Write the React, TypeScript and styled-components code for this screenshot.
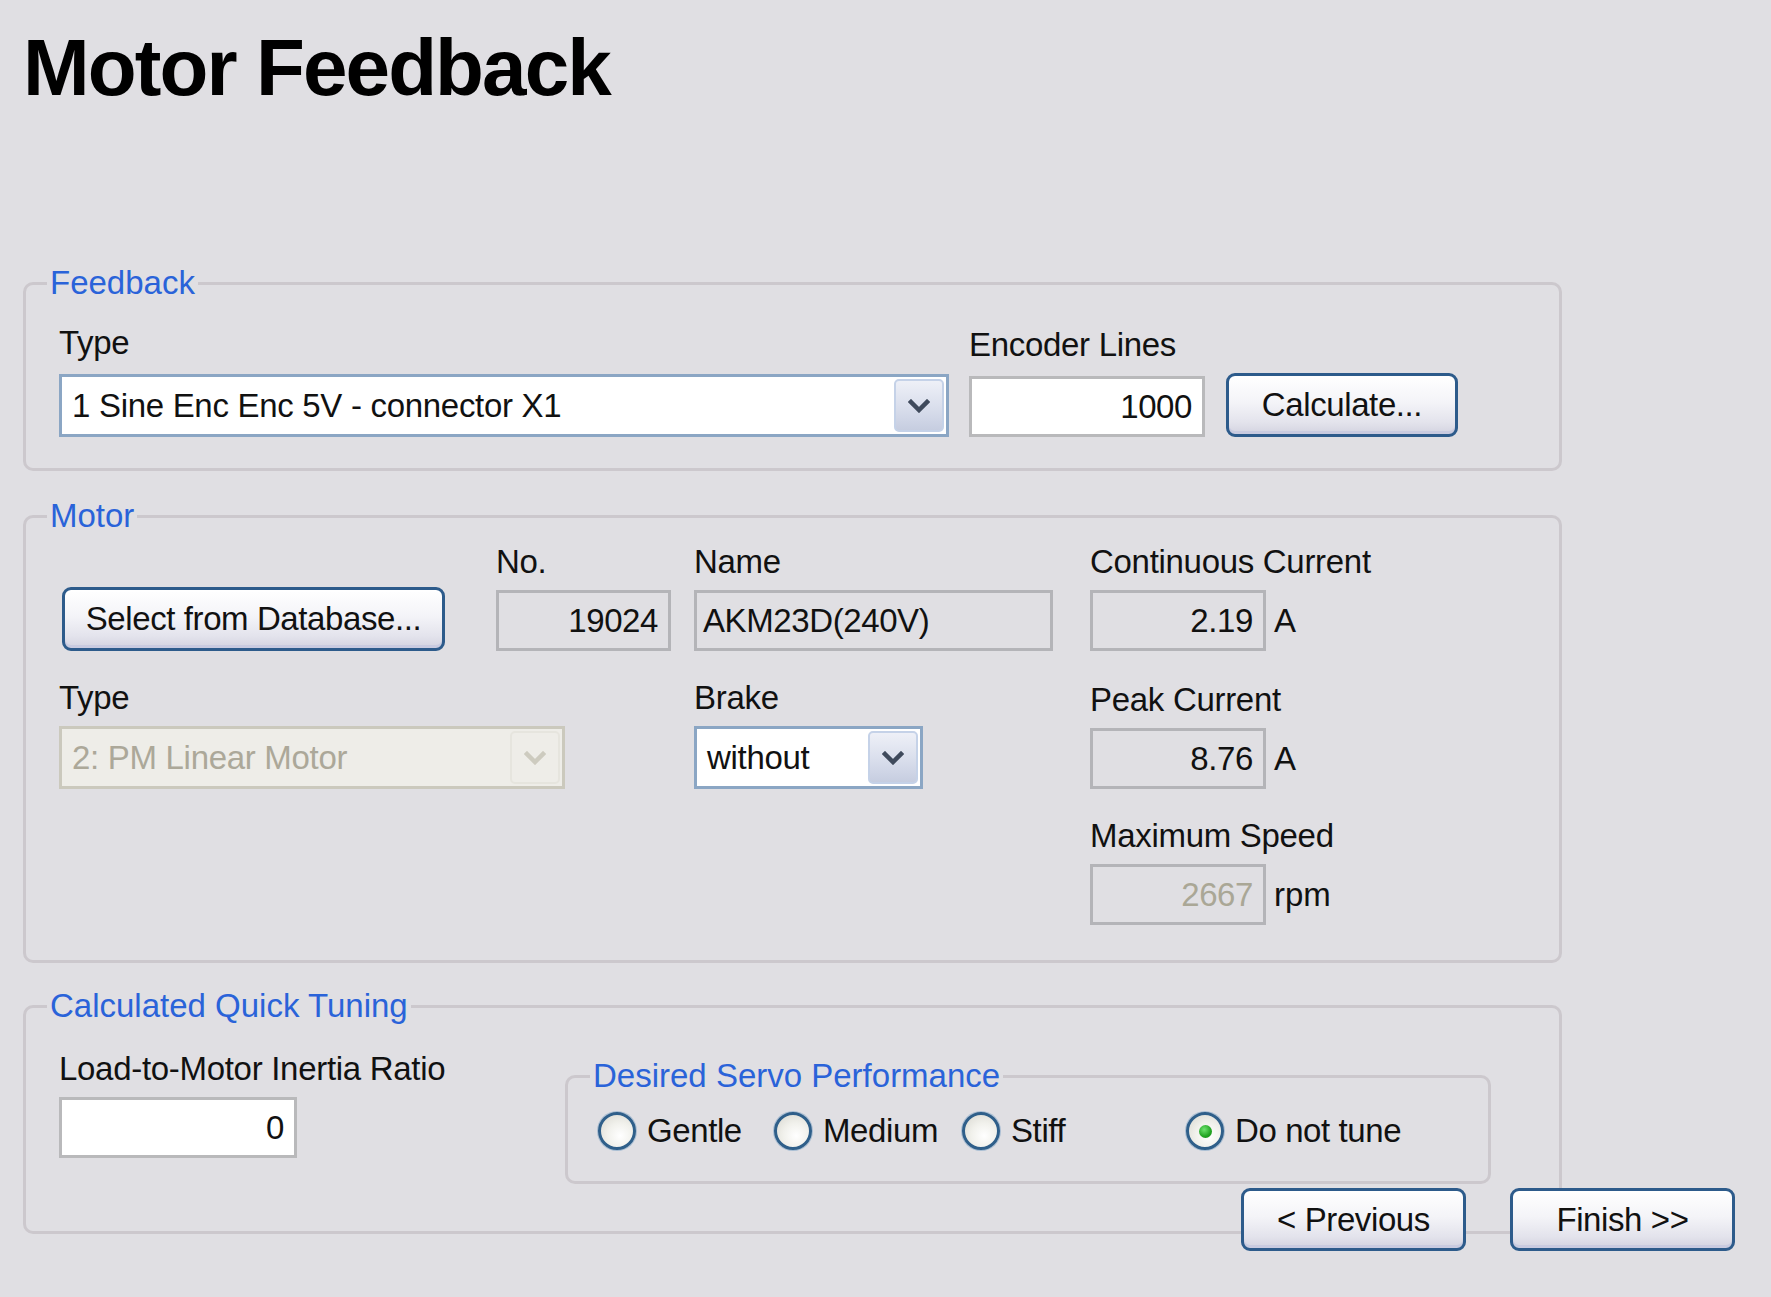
import styled, { createGlobalStyle } from 'styled-components';

const GlobalStyle = createGlobalStyle`
  html, body {
    margin: 0;
    padding: 0;
    background: #e0dfe3;
  }
  body {
    font-family: 'Liberation Sans', Arial, sans-serif;
    color: #111;
  }
`;

const Page = styled.div`
  width: 1771px;
  min-height: 1297px;
  box-sizing: border-box;
  padding: 23px 0 0 23px;
  background: #e0dfe3;
`;

const Title = styled.h1`
  margin: 0 0 151px 0;
  font-size: 80px;
  line-height: 90px;
  font-weight: 700;
  letter-spacing: -1.9px;
  color: #000;
`;

const Group = styled.fieldset<{ $width: number; $mt?: number }>`
  width: ${(p) => p.$width}px;
  box-sizing: border-box;
  margin: ${(p) => p.$mt || 0}px 0 0 0;
  padding: 0;
  min-width: 0;
  border: 3px solid #ccc8cd;
  border-radius: 10px;
`;

const Legend = styled.legend<{ $ml?: number }>`
  margin-left: ${(p) => p.$ml ?? 21}px;
  padding: 0 3px;
  font-size: 33px;
  line-height: 38px;
  color: #2a63d9;
`;

const GroupBody = styled.div<{ $pt: number; $pb: number; $pl?: number }>`
  padding: ${(p) => p.$pt}px 0 ${(p) => p.$pb}px ${(p) => p.$pl ?? 33}px;
`;

const Row = styled.div`
  display: flex;
  align-items: flex-end;
`;

const Field = styled.div<{ $width?: number; $gap?: number }>`
  display: flex;
  flex-direction: column;
  gap: ${(p) => p.$gap ?? 9}px;
  ${(p) => (p.$width ? `width: ${p.$width}px;` : '')}
`;

const Label = styled.div`
  font-size: 33px;
  line-height: 38px;
  letter-spacing: -0.3px;
  white-space: nowrap;
`;

const TextBox = styled.div<{ $width: number; $readOnly?: boolean; $dim?: boolean; $align?: 'left' | 'right' }>`
  width: ${(p) => p.$width}px;
  height: 61px;
  box-sizing: border-box;
  border: 3px solid ${(p) => (p.$readOnly ? '#b4b4b8' : '#b9b9bb')};
  background: ${(p) => (p.$readOnly ? '#e0dfe3' : '#ffffff')};
  color: ${(p) => (p.$dim ? '#aaa796' : '#111')};
  font-size: 33px;
  line-height: 55px;
  text-align: ${(p) => p.$align || 'right'};
  padding: 0 ${(p) => (p.$align === 'left' ? '0 0 6px' : '10px 0 0')};
  letter-spacing: -0.4px;
  white-space: nowrap;
  overflow: hidden;
`;

const UnitRow = styled.div`
  display: flex;
  align-items: center;
  gap: 8px;
`;

const Unit = styled.span`
  font-size: 33px;
  line-height: 38px;
`;

const Combo = styled.div<{ $width: number; $disabled?: boolean }>`
  width: ${(p) => p.$width}px;
  height: 63px;
  box-sizing: border-box;
  display: flex;
  align-items: stretch;
  border: 3px solid ${(p) => (p.$disabled ? '#cbc9bd' : '#8ba6c4')};
  background: ${(p) => (p.$disabled ? '#eeede8' : '#ffffff')};
  padding: 2px;
`;

const ComboText = styled.div<{ $disabled?: boolean }>`
  flex: 1;
  padding-left: 8px;
  font-size: 33px;
  line-height: 53px;
  letter-spacing: -0.3px;
  color: ${(p) => (p.$disabled ? '#aca899' : '#111')};
  white-space: nowrap;
  overflow: hidden;
`;

const DropButton = styled.div<{ $disabled?: boolean }>`
  width: 46px;
  display: flex;
  align-items: center;
  justify-content: center;
  border-radius: 5px;
  border: 2px solid ${(p) => (p.$disabled ? '#e6e5de' : '#c5d2e8')};
  background: ${(p) =>
    p.$disabled
      ? '#eeede8'
      : 'linear-gradient(180deg, #eef0f7 0%, #d9deec 55%, #c6cde0 100%)'};
  color: ${(p) => (p.$disabled ? '#cdcbbf' : '#3f4a5c')};
`;

const Button = styled.div<{ $width: number; $height?: number }>`
  width: ${(p) => p.$width}px;
  height: ${(p) => p.$height || 64}px;
  box-sizing: border-box;
  display: flex;
  align-items: center;
  justify-content: center;
  border: 3px solid #2d5b8b;
  border-radius: 9px;
  background: linear-gradient(180deg, #ffffff 0%, #f4f4f8 45%, #e3e3ec 80%, #d3d3e0 100%);
  box-shadow: inset 0 -3px 0 #c9cbe0, inset 0 2px 0 #ffffff;
  font-size: 33px;
  letter-spacing: -0.4px;
  color: #111;
  white-space: nowrap;
`;

const MotorGrid = styled.div`
  display: grid;
  grid-template-columns: 437px 198px 396px auto;
  row-gap: 28px;
  align-items: end;
`;

const Cell = styled.div<{ $col: string; $row: number; $ml?: number }>`
  grid-column: ${(p) => p.$col};
  grid-row: ${(p) => p.$row};
  ${(p) => (p.$ml ? `margin-left: ${p.$ml}px;` : '')}
`;

const TuningRow = styled.div`
  display: flex;
  align-items: flex-start;
`;

const RadioGrid = styled.div`
  display: grid;
  grid-template-columns: 176px 188px 224px auto;
  align-items: center;
`;

const RadioItem = styled.div`
  display: flex;
  align-items: center;
  gap: 11px;
  font-size: 33px;
  line-height: 38px;
  letter-spacing: -0.4px;
`;

const RadioCircle = styled.span<{ $checked?: boolean }>`
  width: 38px;
  height: 38px;
  box-sizing: border-box;
  border-radius: 50%;
  border: 3px solid #2f5f8a;
  background: radial-gradient(circle at 60% 65%, #ffffff 0%, #f1f1ec 45%, #d8d7cf 100%);
  box-shadow: 0 0 0 1px #a9bed3;
  display: flex;
  align-items: center;
  justify-content: center;

  &::after {
    content: '';
    display: ${(p) => (p.$checked ? 'block' : 'none')};
    width: 13px;
    height: 13px;
    border-radius: 50%;
    background: radial-gradient(circle at 40% 35%, #6ee36e 0%, #21a321 60%, #178a17 100%);
  }
`;

const Footer = styled.div`
  display: flex;
  justify-content: flex-end;
  gap: 44px;
  padding-right: 36px;
  margin-top: -46px;
`;

const Chevron = () => (
  <svg width="22" height="14" viewBox="0 0 22 14">
    <path d="M3 3 L11 11 L19 3" fill="none" stroke="currentColor" strokeWidth="4.5" strokeLinecap="square" />
  </svg>
);

const App = () => {
  const radios = ['Gentle', 'Medium', 'Stiff', 'Do not tune'];
  return (
    <Page>
      <GlobalStyle />
      <Title>Motor Feedback</Title>

      <Group $width={1539}>
        <Legend>Feedback</Legend>
        <GroupBody $pt={22} $pb={31}>
          <Row>
            <Field $width={910} $gap={12}>
              <Label>Type</Label>
              <Combo $width={890}>
                <ComboText>1 Sine Enc Enc 5V - connector X1</ComboText>
                <DropButton>
                  <Chevron />
                </DropButton>
              </Combo>
            </Field>
            <Field $width={257} $gap={12}>
              <Label>Encoder Lines</Label>
              <TextBox $width={236}>1000</TextBox>
            </Field>
            <Button $width={232}>Calculate...</Button>
          </Row>
        </GroupBody>
      </Group>

      <Group $width={1539} $mt={26}>
        <Legend>Motor</Legend>
        <GroupBody $pt={8} $pb={35}>
          <MotorGrid>
            <Cell $col="1" $row={1} $ml={3}>
              <Button $width={383}>Select from Database...</Button>
            </Cell>
            <Cell $col="2" $row={1}>
              <Field>
                <Label>No.</Label>
                <TextBox $width={175} $readOnly>19024</TextBox>
              </Field>
            </Cell>
            <Cell $col="3" $row={1}>
              <Field>
                <Label>Name</Label>
                <TextBox $width={359} $readOnly $align="left">AKM23D(240V)</TextBox>
              </Field>
            </Cell>
            <Cell $col="4" $row={1}>
              <Field>
                <Label>Continuous Current</Label>
                <UnitRow>
                  <TextBox $width={176} $readOnly>2.19</TextBox>
                  <Unit>A</Unit>
                </UnitRow>
              </Field>
            </Cell>

            <Cell $col="1 / 3" $row={2}>
              <Field>
                <Label>Type</Label>
                <Combo $width={506} $disabled>
                  <ComboText $disabled>2: PM Linear Motor</ComboText>
                  <DropButton $disabled>
                    <Chevron />
                  </DropButton>
                </Combo>
              </Field>
            </Cell>
            <Cell $col="3" $row={2}>
              <Field>
                <Label>Brake</Label>
                <Combo $width={229}>
                  <ComboText>without</ComboText>
                  <DropButton>
                    <Chevron />
                  </DropButton>
                </Combo>
              </Field>
            </Cell>
            <Cell $col="4" $row={2}>
              <Field>
                <Label>Peak Current</Label>
                <UnitRow>
                  <TextBox $width={176} $readOnly>8.76</TextBox>
                  <Unit>A</Unit>
                </UnitRow>
              </Field>
            </Cell>

            <Cell $col="4" $row={3}>
              <Field>
                <Label>Maximum Speed</Label>
                <UnitRow>
                  <TextBox $width={176} $readOnly $dim>2667</TextBox>
                  <Unit>rpm</Unit>
                </UnitRow>
              </Field>
            </Cell>
          </MotorGrid>
        </GroupBody>
      </Group>

      <Group $width={1539} $mt={24}>
        <Legend>Calculated Quick Tuning</Legend>
        <GroupBody $pt={25} $pb={47}>
          <TuningRow>
            <Field $width={506}>
              <Label>Load-to-Motor Inertia Ratio</Label>
              <TextBox $width={238}>0</TextBox>
            </Field>
            <Group $width={926} $mt={7}>
              <Legend $ml={22}>Desired Servo Performance</Legend>
              <GroupBody $pt={17} $pb={31} $pl={30}>
                <RadioGrid>
                  {radios.map((r) => (
                    <RadioItem key={r}>
                      <RadioCircle $checked={r === 'Do not tune'} />
                      {r}
                    </RadioItem>
                  ))}
                </RadioGrid>
              </GroupBody>
            </Group>
          </TuningRow>
        </GroupBody>
      </Group>

      <Footer>
        <Button $width={225} $height={63}>&lt; Previous</Button>
        <Button $width={225} $height={63}>Finish &gt;&gt;</Button>
      </Footer>
    </Page>
  );
};

export default App;
